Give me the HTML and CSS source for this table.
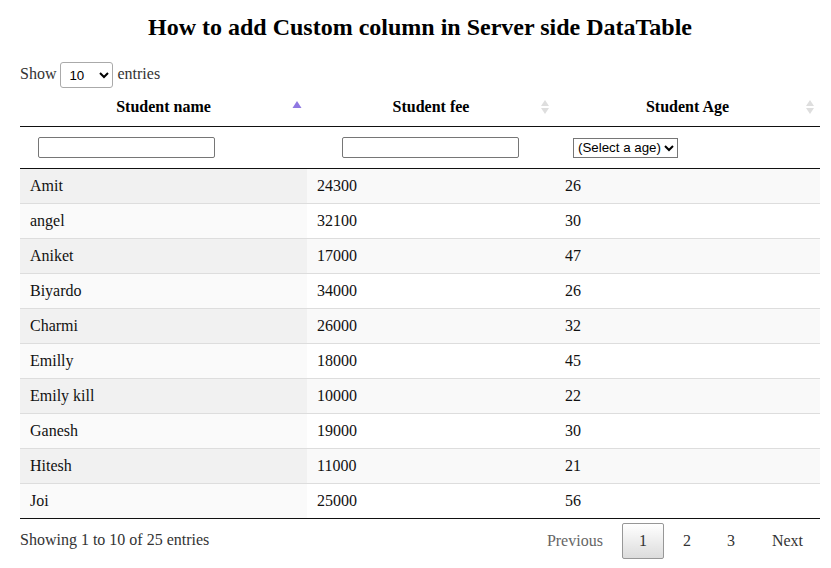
FILE: index.html
```html
<!DOCTYPE html>
<html>
<head>
<meta charset="utf-8">
<title>DataTable</title>
<link rel="stylesheet" href="styles.css">
</head>
<body>
<div class="container">
  <h2 class="title">How to add Custom column in Server side DataTable</h2>
  <div class="length">
    <label>Show <select class="len-select"><option>10</option><option>25</option><option>50</option><option>100</option></select> entries</label>
  </div>
  <table class="dt">
    <colgroup>
      <col class="c1"><col class="c2"><col class="c3">
    </colgroup>
    <thead>
      <tr class="head-row">
        <th class="sort">Student name
          <svg class="sort-ico" width="10" height="19" viewBox="0 0 10 19"><polygon points="5,4 9.5,11 0.5,11" fill="#8f78e2"/></svg>
        </th>
        <th class="sort">Student fee
          <svg class="sort-ico" width="10" height="19" viewBox="0 0 10 19"><polygon points="5,3 9,9 1,9" fill="#dedede"/><polygon points="5,17 9,11 1,11" fill="#dedede"/></svg>
        </th>
        <th class="sort">Student Age
          <svg class="sort-ico" width="10" height="19" viewBox="0 0 10 19"><polygon points="5,3 9,9 1,9" fill="#dedede"/><polygon points="5,17 9,11 1,11" fill="#dedede"/></svg>
        </th>
      </tr>
      <tr class="filter-row">
        <th class="f1"><input type="text" class="f-input"></th>
        <th class="f2"><input type="text" class="f-input"></th>
        <th class="f3"><select class="f-select"><option>(Select a age)</option></select></th>
      </tr>
    </thead>
    <tbody>
      <tr class="odd"><td class="s">Amit</td><td>24300</td><td>26</td></tr>
      <tr class="even"><td class="s">angel</td><td>32100</td><td>30</td></tr>
      <tr class="odd"><td class="s">Aniket</td><td>17000</td><td>47</td></tr>
      <tr class="even"><td class="s">Biyardo</td><td>34000</td><td>26</td></tr>
      <tr class="odd"><td class="s">Charmi</td><td>26000</td><td>32</td></tr>
      <tr class="even"><td class="s">Emilly</td><td>18000</td><td>45</td></tr>
      <tr class="odd"><td class="s">Emily kill</td><td>10000</td><td>22</td></tr>
      <tr class="even"><td class="s">Ganesh</td><td>19000</td><td>30</td></tr>
      <tr class="odd"><td class="s">Hitesh</td><td>11000</td><td>21</td></tr>
      <tr class="even"><td class="s">Joi</td><td>25000</td><td>56</td></tr>
    </tbody>
  </table>
  <div class="footer">
    <div class="info">Showing 1 to 10 of 25 entries</div>
    <div class="paginate">
      <a class="pbtn disabled">Previous</a>
      <a class="pbtn current">1</a>
      <a class="pbtn">2</a>
      <a class="pbtn">3</a>
      <a class="pbtn">Next</a>
    </div>
  </div>
</div>
</body>
</html>
```

FILE: styles.css
```css
html, body {
  margin: 0;
  padding: 0;
  background: #fff;
}
body {
  font-family: "Liberation Serif", "Times New Roman", serif;
  font-size: 16px;
  color: #222;
}
.container {
  width: 800px;
  margin-left: 20px;
}
.title {
  margin: 13px 0 21px;
  font-size: 24px;
  line-height: 28px;
  font-weight: bold;
  text-align: center;
  color: #000;
}
.length {
  height: 26px;
  line-height: 24px;
  color: #333;
}
.len-select {
  width: 53px;
  height: 26px;
  box-sizing: border-box;
  border: 1px solid #aaa;
  border-radius: 3px;
  padding: 4px;
  background: transparent;
  font-family: "Liberation Sans", Arial, sans-serif;
  font-size: 13.33px;
  color: #000;
  vertical-align: top;
  margin: 0;
}
.dt {
  width: 800px;
  table-layout: fixed;
  border-collapse: separate;
  border-spacing: 0;
  color: #111;
}
.c1 { width: 287px; }
.c2 { width: 248px; }
.c3 { width: 265px; }
.head-row th {
  position: relative;
  padding: 10px 18px;
  line-height: 18px;
  font-weight: bold;
  text-align: center;
  border-bottom: 1px solid #111;
  color: #000;
}
.sort-ico {
  position: absolute;
  right: 5px;
  top: 9px;
}
.filter-row th {
  padding: 10px 18px;
  text-align: left;
  border-bottom: 1px solid #111;
  height: 21px;
  line-height: 21px;
}
.filter-row th.f2 {
  padding-left: 35px;
}
.f-input {
  display: block;
  box-sizing: border-box;
  width: 177px;
  height: 21px;
  margin: 0;
  border: 1px solid #767676;
  border-radius: 2px;
  padding: 1px 2px;
  font-size: 13.33px;
}
.f-select {
  display: block;
  margin: 0;
  height: 20px;
  font-family: "Liberation Sans", Arial, sans-serif;
  font-size: 13.33px;
  color: #000;
  border: 1px solid #767676;
  border-radius: 0;
  background: #fff;
  padding: 0;
}
tbody td {
  padding: 8px 10px;
  line-height: 18px;
  border-top: 1px solid #ddd;
}
tbody tr:first-child td {
  border-top: none;
}
tbody tr:last-child td {
  border-bottom: 1px solid #111;
}
tr.odd td { background: #f9f9f9; }
tr.odd td.s { background: #f1f1f1; }
tr.even td { background: #fff; }
tr.even td.s { background: #fafafa; }
.footer {
  display: flex;
  justify-content: space-between;
  align-items: flex-start;
  color: #333;
}
.info {
  padding-top: 12px;
  line-height: 18px;
}
.paginate {
  padding-top: 4px;
  display: flex;
}
.pbtn {
  display: block;
  box-sizing: border-box;
  min-width: 24px;
  padding: 8px 16px;
  margin-left: 2px;
  line-height: 18px;
  border: 1px solid transparent;
  border-radius: 2px;
  text-align: center;
  color: #333;
  cursor: pointer;
}
.pbtn.disabled {
  color: #666;
}
.pbtn.current {
  border: 1px solid #979797;
  background: linear-gradient(to bottom, #fff 0%, #dcdcdc 100%);
}
.pbtn:last-child {
  padding-right: 16px;
  padding-left: 17px;
}
```
